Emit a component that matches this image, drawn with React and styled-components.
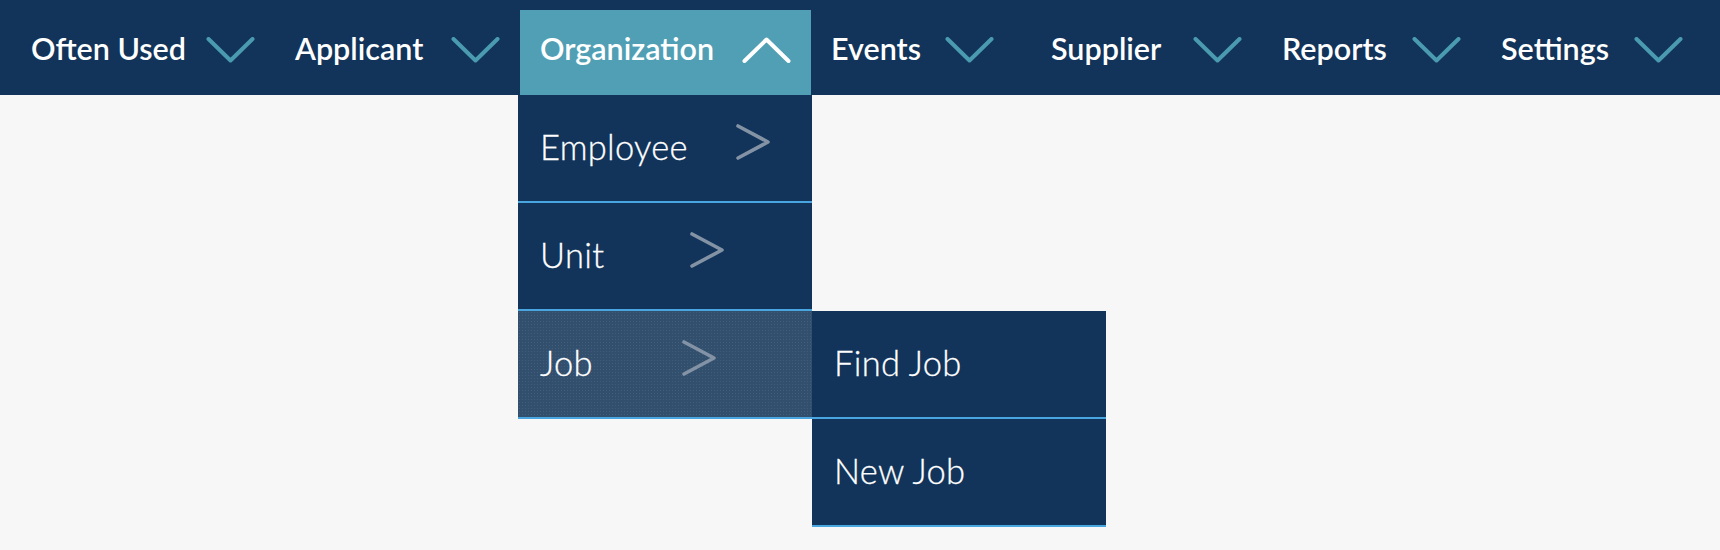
import React from "react";
import styled, { createGlobalStyle } from "styled-components";

const Global = createGlobalStyle`
  html, body { margin: 0; padding: 0; background: #f7f7f7; }
  body { font-family: "Lato", "Open Sans", sans-serif; }
  #root { width: 1720px; height: 550px; background: #f7f7f7; }
`;

const NAVY = "#12345a";
const TEAL = "#519fb5";
const LINE = "#4aa6e0";

const NavBar = styled.nav`
  display: flex;
  align-items: stretch;
  height: 95px;
  padding-left: 11px;
  background: ${NAVY};
`;

const NavItem = styled.div`
  position: relative;
  display: flex;
  align-items: center;
  gap: 22px;
  padding: 0 20px;
  margin-right: ${(p) => p.$trail || 0}px;
  box-sizing: border-box;
  color: #fff;
  font-size: 30.5px;
  font-weight: 600;
  cursor: pointer;
  ${(p) =>
    p.$active &&
    `
    background: ${TEAL};
    margin-top: 10px;
    padding-bottom: 10px;
  `}
`;

const Label = styled.span`
  width: ${(p) => p.$w}px;
  white-space: nowrap;
`;

const Dropdown = styled.div`
  position: absolute;
  top: 100%;
  left: -2px;
  width: 294px;
  display: flex;
  flex-direction: column;
  z-index: 2;
`;

const MenuRow = styled.div`
  position: relative;
  display: flex;
  align-items: center;
  height: 106px;
  padding-left: 22px;
  border-bottom: 2px solid ${LINE};
  box-sizing: content-box;
  color: #fff;
  font-size: 34.5px;
  font-weight: 300;
  background-color: ${(p) => (p.$hover ? "#324f6e" : NAVY)};
  ${(p) =>
    p.$hover &&
    `
    background-image: radial-gradient(rgba(110,140,170,0.25) 0.6px, transparent 0.9px);
    background-size: 3px 3px;
  `}
`;

const RowText = styled.span`
  width: ${(p) => (p.$w ? `${p.$w}px` : "auto")};
  white-space: nowrap;
  padding-bottom: 4px;
  letter-spacing: 0.3px;
  -webkit-text-stroke: 0.3px #ffffff;
`;

const RightArrow = styled.svg`
  width: 34px;
  height: 36px;
  margin-bottom: 12px;
  flex: none;
`;

const Submenu = styled.div`
  position: absolute;
  top: 0;
  left: 100%;
  width: 294px;
  display: flex;
  flex-direction: column;
`;

const SubRow = styled(MenuRow)`
  width: 272px;
`;

const Chevron = ({ up, color }) => (
  <svg width="49" height="26" viewBox="0 0 49 26" style={{ flex: "none", marginTop: 4 }}>
    <path
      d={up ? "M2.5 24 L24.5 2.5 L46.5 24" : "M2.5 2 L24.5 23.5 L46.5 2"}
      fill="none"
      stroke={color}
      strokeWidth="4"
      strokeLinecap="round"
      strokeLinejoin="round"
    />
  </svg>
);

const Arrow = () => (
  <RightArrow viewBox="0 0 34 36">
    <path
      d="M2 2 L32 18 L2 34"
      fill="none"
      stroke="#8393a5"
      strokeWidth="3.6"
      strokeLinecap="round"
      strokeLinejoin="round"
    />
  </RightArrow>
);

const items = [
  { label: "Often Used", w: 153 },
  { label: "Applicant", w: 134 },
  { label: "Organization", w: 180, active: true },
  { label: "Events", w: 92, trail: 17 },
  { label: "Supplier", w: 120 },
  { label: "Reports", w: 108 },
  { label: "Settings", w: 111 },
];

export default function App() {
  return (
    <>
      <Global />
      <NavBar>
        {items.map((it) => (
          <NavItem key={it.label} $active={it.active} $trail={it.trail}>
            <Label $w={it.w}>{it.label}</Label>
            <Chevron up={it.active} color={it.active ? "#ffffff" : "#4a9bb0"} />
            {it.active && (
              <Dropdown>
                <MenuRow>
                  <RowText $w={196}>Employee</RowText>
                  <Arrow />
                </MenuRow>
                <MenuRow>
                  <RowText $w={150}>Unit</RowText>
                  <Arrow />
                </MenuRow>
                <MenuRow $hover>
                  <RowText $w={142}>Job</RowText>
                  <Arrow />
                  <Submenu>
                    <SubRow>
                      <RowText>Find Job</RowText>
                    </SubRow>
                    <SubRow>
                      <RowText>New Job</RowText>
                    </SubRow>
                  </Submenu>
                </MenuRow>
              </Dropdown>
            )}
          </NavItem>
        ))}
      </NavBar>
    </>
  );
}
